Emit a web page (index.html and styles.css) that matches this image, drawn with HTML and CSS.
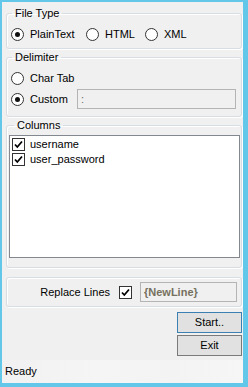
FILE: index.html
```html
<!DOCTYPE html>
<html>
<head>
<meta charset="utf-8">
<link rel="stylesheet" href="styles.css">
</head>
<body>
<div class="window">
  <div class="content">
    <fieldset class="group g-file">
      <legend>File Type</legend>
      <div class="row">
        <span class="opt opt-plain"><span class="radio checked"></span>PlainText</span>
        <span class="opt opt-html"><span class="radio"></span>HTML</span>
        <span class="opt"><span class="radio"></span>XML</span>
      </div>
    </fieldset>
    <fieldset class="group g-delim">
      <legend>Delimiter</legend>
      <div class="row">
        <span class="opt"><span class="radio"></span>Char Tab</span>
      </div>
      <div class="row row-custom">
        <span class="opt opt-custom"><span class="radio checked"></span>Custom</span>
        <span class="textbox tb-delim">:</span>
      </div>
    </fieldset>
    <fieldset class="group g-cols">
      <legend>Columns</legend>
      <div class="listbox">
        <div class="item"><span class="check on"><svg width="11" height="11" viewBox="0 0 11 11"><path d="M2 5.5 L4.3 8 L9 2.5" fill="none" stroke="#000" stroke-width="1.8"/></svg></span>username</div>
        <div class="item"><span class="check on"><svg width="11" height="11" viewBox="0 0 11 11"><path d="M2 5.5 L4.3 8 L9 2.5" fill="none" stroke="#000" stroke-width="1.8"/></svg></span>user_password</div>
      </div>
    </fieldset>
    <div class="group g-replace">
      <span class="rep-label">Replace Lines</span>
      <span class="check on"><svg width="11" height="11" viewBox="0 0 11 11"><path d="M2 5.5 L4.3 8 L9 2.5" fill="none" stroke="#000" stroke-width="1.8"/></svg></span>
      <span class="textbox tb-newline">{NewLine}</span>
    </div>
    <div class="buttons">
      <span class="btn btn-default">Start..</span>
      <span class="btn">Exit</span>
    </div>
  </div>
  <div class="status">Ready</div>
</div>
</body>
</html>
```
FILE: styles.css
```css
html, body {
  margin: 0;
  padding: 0;
}
body {
  width: 248px;
  height: 387px;
  background: #62c7e9;
  font-family: "Liberation Sans", Arial, sans-serif;
  font-size: 11px;
  line-height: 13px;
  color: #000;
  overflow: hidden;
}
.window {
  margin: 2px 5px 4px 2px;
  width: 241px;
  height: 381px;
  background: #f0f0f0;
  display: flex;
  flex-direction: column;
}
.content {
  flex: 1;
  padding: 5px 1px 0 4px;
  display: flex;
  flex-direction: column;
}
.group {
  margin: 0;
  padding: 0;
  border: 1px solid #d7dde2;
  border-radius: 3px;
  box-shadow: inset 1px 1px 0 #fff, 1px 1px 0 #fff;
  min-width: 0;
  width: 236px;
  box-sizing: border-box;
}
legend {
  margin-left: 5px;
  padding: 0 3px;
  line-height: 13px;
}
.row {
  display: flex;
  align-items: center;
  height: 13px;
  padding-left: 4px;
}
.g-file {
  padding-top: 8px;
  padding-bottom: 7px;
}
.g-delim {
  margin-top: 2px;
  padding-top: 8px;
  padding-bottom: 7px;
}
.row-custom {
  margin-top: 4px;
  height: 20px;
}
.opt {
  display: flex;
  align-items: center;
}
.opt-plain { width: 75px; }
.opt-html { width: 59px; }
.opt-custom { width: 66px; }
.radio {
  width: 13px;
  height: 13px;
  box-sizing: border-box;
  border: 1px solid #333;
  border-radius: 50%;
  background: #fff;
  margin-right: 6px;
  display: flex;
  align-items: center;
  justify-content: center;
}
.radio.checked::after {
  content: "";
  width: 5px;
  height: 5px;
  border-radius: 50%;
  background: #111;
}
.textbox {
  box-sizing: border-box;
  border: 1px solid #b4b4b4;
  background: #f0f0f0;
  height: 20px;
  display: flex;
  align-items: center;
  padding-left: 3px;
  color: #6d6d6d;
}
.tb-delim {
  width: 159px;
}
.g-cols {
  margin-top: 2px;
  padding: 3px 1px 9px 2px;
}
.listbox {
  height: 123px;
  box-sizing: border-box;
  border: 1px solid #828790;
  background: #fff;
  padding: 1px 2px;
}
.item {
  display: flex;
  align-items: center;
  height: 15px;
}
.check {
  width: 13px;
  height: 13px;
  box-sizing: border-box;
  border: 1px solid #333;
  background: #fff;
  margin-right: 5px;
  display: flex;
}
.g-replace {
  margin-top: 9px;
  height: 30px;
  display: flex;
  align-items: center;
  justify-content: flex-end;
  padding-right: 4px;
}
.rep-label {
  margin-right: 9px;
}
.g-replace .check {
  margin-right: 8px;
}
.tb-newline {
  width: 97px;
  font-weight: bold;
  color: #76705f;
}
.buttons {
  margin-top: 5px;
  display: flex;
  flex-direction: column;
  align-items: flex-end;
  gap: 2px;
  width: 236px;
}
.btn {
  width: 65px;
  height: 21px;
  box-sizing: border-box;
  border: 1px solid #7a7a7a;
  background: #e1e1e1;
  display: flex;
  align-items: center;
  justify-content: center;
}
.btn-default {
  border-color: #3c7fb1;
}
.status {
  height: 23px;
  display: flex;
  align-items: center;
  padding-left: 3px;
  background: linear-gradient(to right, #f1f1f1, #f5f5f5 40%, #f3f3f3 70%, #f6f6f6);
}
```
